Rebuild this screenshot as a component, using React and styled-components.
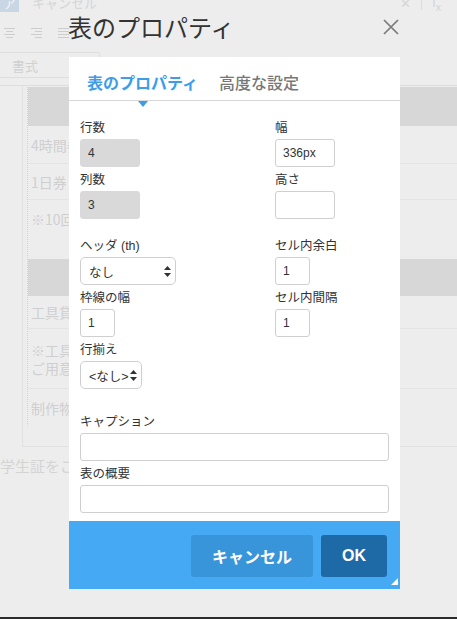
import React from "react";
import styled, { createGlobalStyle, css } from "styled-components";

const GlobalStyle = createGlobalStyle`
    html, body {
        margin: 0;
        padding: 0;
        background: #ededed;
    }
    body {
        font-family: "Liberation Sans", "Noto Sans CJK JP", sans-serif;
    }
    * {
        box-sizing: border-box;
    }
`;

const Page = styled.div`
    width: 457px;
    height: 619px;
    display: flex;
    flex-direction: column;
    overflow: hidden;
`;

const Stage = styled.div`
    position: relative;
    flex: 1;
    overflow: hidden;
    background: #ededed;
`;

const BottomEdge = styled.div`
    height: 2px;
    background: #2b2b2b;
`;

/* ---------- faded editor behind the dialog ---------- */

const Editor = styled.div`
    color: #cdcdcd;
    font-family: "Noto Sans CJK JP", sans-serif;
`;

const Toolbar = styled.div`
    height: 86px;
    border-bottom: 1px solid #dedede;
    display: flex;
    flex-direction: column;
`;

const ToolRow = styled.div`
    display: flex;
    align-items: center;
    height: ${(p) => p.h}px;
    margin-top: ${(p) => p.mt || 0}px;
    padding-left: ${(p) => p.pl || 0}px;
    gap: ${(p) => p.gap || 0}px;
`;

const KeyButton = styled.div`
    width: 19px;
    height: 19px;
    background: #c9d6e4;
    color: #f2f5f8;
    font-size: 13px;
    display: flex;
    align-items: center;
    justify-content: center;
`;

const ToolText = styled.span`
    font-size: 13px;
    color: #d5d5d5;
    margin-left: ${(p) => p.ml || 0}px;
`;

const ToolSep = styled.span`
    width: 1px;
    height: 14px;
    background: #dcdcdc;
    margin: 0 10px;
`;

const FormatBox = styled.div`
    margin-left: -10px;
    width: 110px;
    height: 26px;
    border: 1px solid #dedede;
    border-radius: 2px;
    display: flex;
    align-items: center;
    padding-left: 21px;
    font-size: 13px;
    color: #d0d0d0;
`;

const Sheet = styled.div`
    margin-left: 22px;
    border-left: 1px solid #e1e1e1;
    border-bottom: 1px solid #e1e1e1;
    padding: 1px 0 20px 4px;
`;

const BgTable = styled.div`
    border-left: 1px dotted #d4d4d4;
`;

const Band = styled.div`
    height: ${(p) => p.h}px;
    background: #d7d7d7;
`;

const BgRow = styled.div`
    height: ${(p) => p.h}px;
    display: flex;
    flex-direction: column;
    justify-content: center;
    padding-left: 3px;
    font-size: 14px;
    line-height: 18px;
    color: #cfcfcf;
    ${(p) =>
        p.line &&
        css`
            border-bottom: 1px solid #e4e4e4;
        `};
`;

const Footnote = styled.div`
    margin-top: 8px;
    font-size: 15px;
    color: #d4d4d4;
    white-space: nowrap;
`;

/* ---------- dialog ---------- */

const Modal = styled.div`
    position: absolute;
    left: 69px;
    top: 0;
    width: 331px;
    display: flex;
    flex-direction: column;
`;

const TitleBar = styled.div`
    height: 57px;
    padding: 0 1px 4px 0;
    display: flex;
    align-items: center;
    justify-content: space-between;
`;

const Title = styled.h2`
    margin: 0;
    font-family: "Noto Sans CJK JP", sans-serif;
    font-weight: 400;
    font-size: 24px;
    line-height: 28px;
    color: #333;
    margin-left: -1px;
`;

const CloseButton = styled.button`
    border: 0;
    background: none;
    padding: 0;
    width: 16px;
    height: 16px;
    display: flex;
`;

const Body = styled.div`
    background: #fff;
`;

const TabBar = styled.div`
    height: 44px;
    border-bottom: 1px solid #d8d8d8;
    display: flex;
    gap: 21px;
    padding: 0 18px;
`;

const Tab = styled.div`
    position: relative;
    padding-top: 17px;
    font-family: "Noto Sans CJK JP", sans-serif;
    font-size: 16px;
    line-height: 16px;
    font-weight: 500;
    color: #777;
    ${(p) =>
        p.active &&
        css`
            color: #3d9de8;
            font-weight: 700;
            &::after {
                content: "";
                position: absolute;
                left: 50%;
                bottom: -7px;
                margin-left: -5px;
                border-left: 5px solid transparent;
                border-right: 5px solid transparent;
                border-top: 6px solid #3d9de8;
            }
        `};
`;

const Form = styled.div`
    padding: 19px 11px 8px;
    display: flex;
    flex-direction: column;
`;

const Section = styled.div`
    display: grid;
    grid-template-columns: ${(p) => (p.full ? "1fr" : "195px 1fr")};
    row-gap: 5px;
    margin-top: ${(p) => p.mt || 0}px;
`;

const Field = styled.div`
    display: flex;
    flex-direction: column;
    align-items: flex-start;
`;

const Label = styled.label`
    font-size: 12.5px;
    line-height: 16px;
    height: 16px;
    margin-bottom: 3px;
    color: #333;
`;

const TextInput = styled.input`
    width: ${(p) => p.w || 60}px;
    height: 28px;
    border: 1px solid #cfcfcf;
    border-radius: 3px;
    background: #fff;
    padding: 0 7px;
    font-family: "Liberation Sans", "Noto Sans CJK JP", sans-serif;
    font-size: 12px;
    color: #333;
    outline: none;
    ${(p) =>
        p.readOnly &&
        css`
            background: #d9d9d9;
            border-color: #d9d9d9;
        `};
`;

const SelectBox = styled.div`
    width: ${(p) => p.w}px;
    height: 28px;
    border: 1px solid #cfcfcf;
    border-radius: 5px;
    background: #fff;
    display: flex;
    align-items: center;
    justify-content: space-between;
    padding: 0 4px 0 8px;
    font-size: 12.5px;
    color: #333;
`;

const Footer = styled.div`
    position: relative;
    height: 68px;
    background: #45aaf3;
    display: flex;
    justify-content: flex-end;
    align-items: flex-start;
    gap: 8px;
    padding: 14px 13px 0;
    &::after {
        content: "";
        position: absolute;
        right: 2px;
        bottom: 4px;
        border-left: 7px solid transparent;
        border-bottom: 7px solid #fff;
    }
`;

const Button = styled.button`
    height: 42px;
    padding: 0 21px;
    border: 0;
    border-radius: 3px;
    background: ${(p) => (p.primary ? "#1d6aa6" : "#3995da")};
    color: #fff;
    font-family: "Liberation Sans", "Noto Sans CJK JP", sans-serif;
    font-size: 16px;
    font-weight: 700;
`;

const AlignIcon = ({ kind }) => {
    const rows = {
        center: [[0, 11], [2, 7], [0, 11], [2, 7]],
        right: [[0, 11], [4, 7], [0, 11], [4, 7]],
        justify: [[0, 11], [0, 11], [0, 11], [0, 11]],
    }[kind];
    return (
        <svg width="11" height="10" viewBox="0 0 11 10">
            {rows.map(([x, w], i) => (
                <rect key={i} x={x} y={i * 3} width={w} height="1" fill="#cdcdcd" />
            ))}
        </svg>
    );
};

const SelectArrows = () => (
    <svg width="7" height="11" viewBox="0 0 7 11">
        <path d="M3.5 0 L7 4 H0 Z M0 7 H7 L3.5 11 Z" fill="#333" />
    </svg>
);

const Select = ({ value, w }) => (
    <SelectBox w={w}>
        <span>{value}</span>
        <SelectArrows />
    </SelectBox>
);

const App = () => {
    return (
        <Page>
            <GlobalStyle />
            <Stage>
                <Editor>
                    <Toolbar>
                        <ToolRow h={19} mt={-7}>
                            <KeyButton>ア</KeyButton>
                            <ToolText ml={13}>キャンセル</ToolText>
                            <ToolText ml={303}>✕</ToolText>
                            <ToolSep />
                            <ToolText>I<sub>x</sub></ToolText>
                        </ToolRow>
                        <ToolRow h={12} mt={15} pl={4} gap={16}>
                            <AlignIcon kind="center" />
                            <AlignIcon kind="right" />
                            <AlignIcon kind="justify" />
                        </ToolRow>
                        <ToolRow h={26} mt={13}>
                            <FormatBox>書式</FormatBox>
                        </ToolRow>
                    </Toolbar>
                    <Sheet>
                        <BgTable>
                            <Band h={39} />
                            <BgRow h={38} line>4時間券</BgRow>
                            <BgRow h={36} line>1日券</BgRow>
                            <BgRow h={38}>※10回券</BgRow>
                            <BgRow h={21} />
                            <Band h={37} />
                            <BgRow h={33} line>工具貸出</BgRow>
                            <BgRow h={60} line>
                                <span>※工具の</span>
                                <span>ご用意</span>
                            </BgRow>
                            <BgRow h={37}>制作物</BgRow>
                        </BgTable>
                    </Sheet>
                    <Footnote>学生証をご提示ください</Footnote>
                </Editor>

                <Modal>
                    <TitleBar>
                        <Title>表のプロパティ</Title>
                        <CloseButton aria-label="close">
                            <svg width="16" height="16" viewBox="0 0 16 16">
                                <path d="M1 1 L15 15 M15 1 L1 15" stroke="#7a7a7a" strokeWidth="1.7" />
                            </svg>
                        </CloseButton>
                    </TitleBar>
                    <Body>
                        <TabBar>
                            <Tab active>表のプロパティ</Tab>
                            <Tab>高度な設定</Tab>
                        </TabBar>
                        <Form>
                            <Section>
                                <Field>
                                    <Label>行数</Label>
                                    <TextInput readOnly value="4" />
                                </Field>
                                <Field>
                                    <Label>幅</Label>
                                    <TextInput defaultValue="336px" />
                                </Field>
                                <Field>
                                    <Label>列数</Label>
                                    <TextInput readOnly value="3" />
                                </Field>
                                <Field>
                                    <Label>高さ</Label>
                                    <TextInput defaultValue="" />
                                </Field>
                            </Section>
                            <Section mt={19}>
                                <Field>
                                    <Label>ヘッダ (th)</Label>
                                    <Select value="なし" w={96} />
                                </Field>
                                <Field>
                                    <Label>セル内余白</Label>
                                    <TextInput w={35} defaultValue="1" />
                                </Field>
                                <Field>
                                    <Label>枠線の幅</Label>
                                    <TextInput w={35} defaultValue="1" />
                                </Field>
                                <Field>
                                    <Label>セル内間隔</Label>
                                    <TextInput w={35} defaultValue="1" />
                                </Field>
                                <Field>
                                    <Label>行揃え</Label>
                                    <Select value="<なし>" w={62} />
                                </Field>
                            </Section>
                            <Section full mt={25}>
                                <Field>
                                    <Label>キャプション</Label>
                                    <TextInput w={309} defaultValue="" />
                                </Field>
                                <Field>
                                    <Label>表の概要</Label>
                                    <TextInput w={309} defaultValue="" />
                                </Field>
                            </Section>
                        </Form>
                    </Body>
                    <Footer>
                        <Button>キャンセル</Button>
                        <Button primary>OK</Button>
                    </Footer>
                </Modal>
            </Stage>
            <BottomEdge />
        </Page>
    );
};

export default App;
